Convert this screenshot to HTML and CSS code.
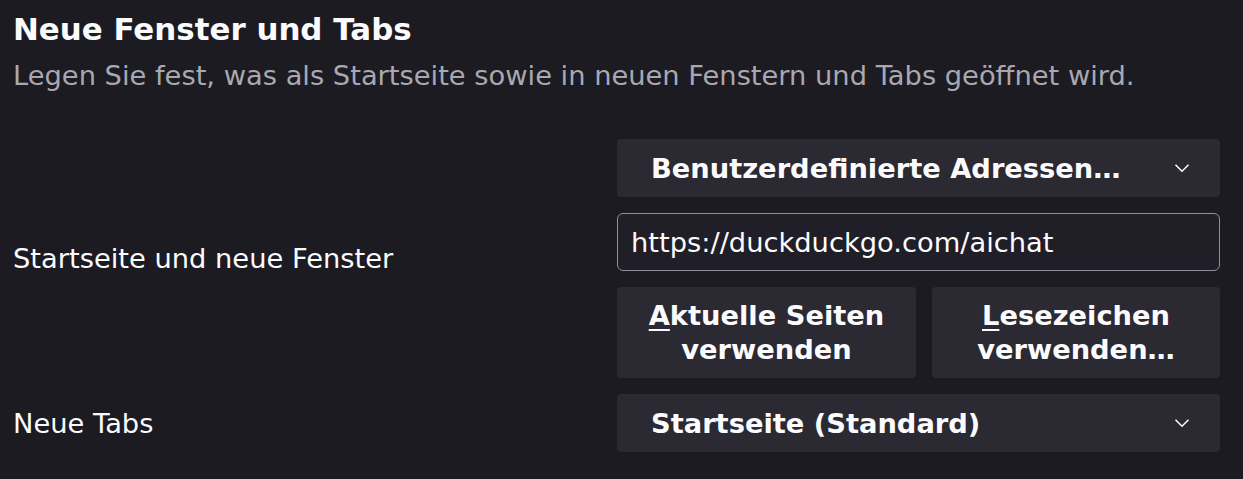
FILE: index.html
```html
<!DOCTYPE html>
<html lang="de">
<head>
<meta charset="utf-8">
<link rel="stylesheet" href="styles.css">
</head>
<body>
<section class="pane">
  <h1 class="title">Neue Fenster und Tabs</h1>
  <p class="desc">Legen Sie fest, was als Startseite sowie in neuen Fenstern und Tabs geöffnet wird.</p>
  <div class="rows">
    <div class="label">Startseite und neue Fenster</div>
    <div class="controls">
      <div class="select">
        <span>Benutzerdefinierte Adressen…</span>
        <svg class="chev" width="16" height="10" viewBox="0 0 16 10"><path d="M1.5 1.8 L8 8.2 L14.5 1.8" fill="none" stroke="#fbfbfe" stroke-width="1.6"/></svg>
      </div>
      <div class="input">https://duckduckgo.com/aichat</div>
      <div class="btnrow">
        <div class="btn"><span><u>A</u>ktuelle Seiten<br>verwenden</span></div>
        <div class="btn"><span><u>L</u>esezeichen<br>verwenden…</span></div>
      </div>
    </div>
    <div class="label">Neue Tabs</div>
    <div class="controls">
      <div class="select">
        <span>Startseite (Standard)</span>
        <svg class="chev" width="16" height="10" viewBox="0 0 16 10"><path d="M1.5 1.8 L8 8.2 L14.5 1.8" fill="none" stroke="#fbfbfe" stroke-width="1.6"/></svg>
      </div>
    </div>
  </div>
</section>
</body>
</html>
```

FILE: styles.css
```css
html, body {
  margin: 0;
  padding: 0;
  background: #1c1b22;
  color: #fbfbfe;
  font-family: "DejaVu Sans", sans-serif;
}
.pane {
  padding: 11px 23px 0 13px;
}
.title {
  margin: 0;
  font-size: 30.9px;
  font-weight: bold;
  line-height: 37px;
}
.desc {
  margin: 10px 0 0;
  font-size: 27.3px;
  line-height: 36px;
  color: #a9a8b0;
}
.rows {
  margin-top: 45px;
  display: grid;
  grid-template-columns: 1fr 603px;
  row-gap: 16px;
  align-items: center;
}
.label {
  font-size: 27.3px;
}
.controls {
  display: flex;
  flex-direction: column;
  gap: 16px;
}
.select {
  height: 58px;
  background: #2b2a33;
  border-radius: 4px;
  display: flex;
  align-items: center;
  justify-content: space-between;
  padding: 0 30px 0 34px;
  font-size: 27.3px;
  font-weight: bold;
  box-sizing: border-box;
}
.chev {
  display: block;
}
.input {
  height: 58px;
  box-sizing: border-box;
  border: 1px solid #8f8f9d;
  border-radius: 6px;
  background: #201f27;
  display: flex;
  align-items: center;
  padding: 0 13px;
  font-size: 27.3px;
}
.btnrow {
  display: grid;
  grid-template-columns: 299px 1fr;
  gap: 16px;
}
.btn {
  height: 91px;
  box-sizing: border-box;
  background: #2b2a33;
  border-radius: 4px;
  display: flex;
  align-items: center;
  justify-content: center;
  text-align: center;
  font-size: 27.3px;
  font-weight: bold;
  line-height: 34px;
}
.btn u {
  text-decoration-thickness: 2px;
  text-underline-offset: 4px;
}
```
